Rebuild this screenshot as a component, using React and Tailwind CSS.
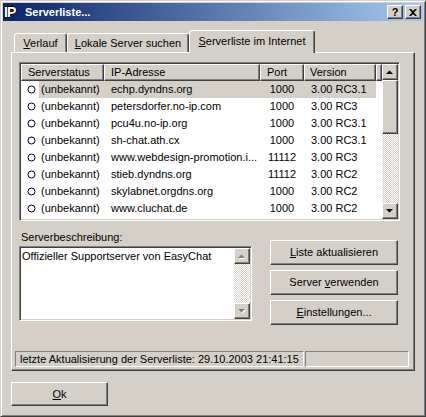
import React from 'react';

const raised =
  'bg-[#d4d0c8] border border-t-white border-l-white border-r-[#404040] border-b-[#404040] shadow-[inset_-1px_-1px_#808080]';
const sunken =
  'border border-t-[#808080] border-l-[#808080] border-r-white border-b-white shadow-[inset_1px_1px_#404040,inset_-1px_-1px_#d4d0c8] p-px';
const thinSunken = 'border border-t-[#808080] border-l-[#808080] border-r-white border-b-white';
const checker =
  'bg-[repeating-conic-gradient(#d4d0c8_0%_25%,#ffffff_0%_50%)] bg-[length:2px_2px]';

const rows = [
  ['echp.dyndns.org', '1000', '3.00 RC3.1'],
  ['petersdorfer.no-ip.com', '1000', '3.00 RC3'],
  ['pcu4u.no-ip.org', '1000', '3.00 RC3.1'],
  ['sh-chat.ath.cx', '1000', '3.00 RC3.1'],
  ['www.webdesign-promotion.i...', '11112', '3.00 RC3'],
  ['stieb.dyndns.org', '11112', '3.00 RC2'],
  ['skylabnet.orgdns.org', '1000', '3.00 RC2'],
  ['www.cluchat.de', '1000', '3.00 RC2'],
];

function Arrow({ up, disabled }) {
  const pts = up ? '0,4 7,4 3.5,0.5' : '0,0 7,0 3.5,3.5';
  return (
    <svg width="8" height="5" viewBox="0 0 8 5" className={up ? '' : 'mt-px'}>
      {disabled && <polygon points={pts} fill="#ffffff" transform="translate(1,1)" />}
      <polygon points={pts} fill={disabled ? '#808080' : '#000000'} />
    </svg>
  );
}

function ScrollBtn({ up, disabled }) {
  return (
    <div className={`${raised} w-[16px] h-[16px] flex items-center justify-center shrink-0`}>
      <Arrow up={up} disabled={disabled} />
    </div>
  );
}

function Tab({ children, width, active }) {
  if (active) {
    return (
      <div
        className={`relative z-10 h-[23px] ${width} bg-[#d4d0c8] border-t border-l border-r border-t-white border-l-white border-r-[#404040] shadow-[inset_-1px_0_#808080] rounded-t-[3px] flex items-center justify-center pb-[2px]`}
      >
        {children}
      </div>
    );
  }
  return (
    <div
      className={`h-[19px] mb-px ${width} bg-[#d4d0c8] border-t border-l border-r border-t-white border-l-white border-r-[#404040] shadow-[inset_-1px_0_#808080] rounded-t-[3px] flex items-center justify-center`}
    >
      {children}
    </div>
  );
}

function Button({ children, className = '' }) {
  return (
    <div className={`${raised} flex items-center justify-center ${className}`}>
      <span>{children}</span>
    </div>
  );
}

export default function App() {
  return (
    <div
      className="w-[426px] h-[417px] bg-[#d4d0c8] text-black text-[11px] leading-[13px] border border-t-[#d4d0c8] border-l-[#d4d0c8] border-r-[#404040] border-b-[#404040] shadow-[inset_1px_1px_#ffffff,inset_-1px_-1px_#808080] p-[2px] select-none overflow-hidden"
      style={{ fontFamily: '"Liberation Sans", Arial, sans-serif' }}
    >
      {/* Titelleiste */}
      <div className="h-[18px] flex items-center bg-[linear-gradient(to_right,#0a246a,#a6caf0)] pl-[1px] pr-[2px]">
        <span className="w-[17px] text-[14px] leading-[16px] font-bold text-white tracking-[-1px] [text-shadow:1px_0_#000,-1px_0_#000,0_1px_#000,0_-1px_#000]">
          IP
        </span>
        <span className="ml-[4px] font-bold text-white">Serverliste...</span>
        <div className="ml-auto flex gap-[2px]">
          <div className={`${raised} w-[16px] h-[14px] flex items-center justify-center font-bold text-[11px] leading-none`}>
            ?
          </div>
          <div className={`${raised} w-[16px] h-[14px] flex items-center justify-center`}>
            <svg width="8" height="7" viewBox="0 0 8 7">
              <path d="M0 0h2l2 2 2-2h2L5 3.5 8 7H6L4 5 2 7H0l3-3.5z" fill="#000" />
            </svg>
          </div>
        </div>
      </div>

      <div className="px-[8px]">
        {/* Reiter */}
        <div className="relative z-10 mt-[9px] h-[23px] flex items-end">
          <Tab width="w-[53px] ml-[3px]">
            <span><u>V</u>erlauf</span>
          </Tab>
          <Tab width="w-[122px]">
            <span><u>L</u>okale Server suchen</span>
          </Tab>
          <Tab width="w-[126px]" active>
            <span><u>S</u>erverliste im Internet</span>
          </Tab>
        </div>

        {/* Reiterseite */}
        <div className="-mt-px h-[319px] flex flex-col border border-t-white border-l-white border-r-[#404040] border-b-[#404040] shadow-[inset_-1px_-1px_#808080] pt-[9px] pl-[7px]">
          {/* Serverliste */}
          <div className={`${sunken} w-[381px] h-[159px] bg-white flex`}>
            <div className="w-[361px] flex flex-col">
              <div className="flex h-[17px] shrink-0">
                <div className={`${raised} w-[83px] pl-[6px] flex items-center`}>Serverstatus</div>
                <div className={`${raised} w-[156px] pl-[6px] flex items-center`}>IP-Adresse</div>
                <div className={`${raised} w-[44px] pl-[6px] flex items-center`}>Port</div>
                <div className={`${raised} w-[72px] pl-[5px] flex items-center`}>Version</div>
                <div className={`${raised} w-[6px]`} />
              </div>
              {rows.map(([host, port, version], i) => (
                <div key={host} className="flex h-[17px] items-center">
                  <div className="w-[18px] h-full flex items-center pl-[6px]">
                    <svg width="9" height="9" viewBox="0 0 9 9">
                      <circle cx="4.5" cy="4.5" r="3.5" fill="#fff" stroke="#000" strokeWidth="1" />
                    </svg>
                  </div>
                  <div className={`flex h-full items-center ${i === 0 ? 'bg-[#d4d0c8]' : ''}`}>
                    <div className="w-[65px] pl-[2px]">(unbekannt)</div>
                    <div className="w-[156px] pl-[7px] whitespace-nowrap overflow-hidden">{host}</div>
                    <div className="w-[44px] text-center">{port}</div>
                    <div className="w-[72px] pl-[7px] whitespace-nowrap">{version}</div>
                  </div>
                </div>
              ))}
            </div>
            <div className="w-[16px] flex flex-col">
              <ScrollBtn up />
              <div className={`${raised} h-[54px] shrink-0`} />
              <div className={`${checker} flex-1`} />
              <ScrollBtn />
            </div>
          </div>

          {/* Beschreibung und Knöpfe */}
          <div className="flex mt-[10px]">
            <div className="w-[233px] flex flex-col">
              <div className="h-[15px] pl-[2px]">Serverbeschreibung:</div>
              <div className={`${sunken} h-[75px] bg-white flex`}>
                <div className="flex-1 pt-[2px] pl-[1px] whitespace-nowrap">
                  Offizieller Supportserver von EasyChat
                </div>
                <div className="w-[16px] flex flex-col">
                  <ScrollBtn up disabled />
                  <div className={`${checker} flex-1`} />
                  <ScrollBtn disabled />
                </div>
              </div>
            </div>
            <div className="ml-[18px] pt-[9px] flex flex-col gap-[5px]">
              <Button className="w-[128px] h-[25px]">
                <u>L</u>iste aktualisieren
              </Button>
              <Button className="w-[128px] h-[25px]">
                Server <u>v</u>erwenden
              </Button>
              <Button className="w-[128px] h-[25px]">
                <u>E</u>instellungen...
              </Button>
            </div>
          </div>

          {/* Statusleiste */}
          <div className="mt-auto mb-[3px] -ml-[4px] flex gap-[1px]">
            <div className={`${thinSunken} w-[289px] h-[16px] pl-[4px] flex items-center whitespace-nowrap`}>
              letzte Aktualisierung der Serverliste: 29.10.2003 21:41:15
            </div>
            <div className={`${thinSunken} w-[104px] h-[16px]`} />
          </div>
        </div>

        <Button className="mt-[11px] w-[97px] h-[24px]">
          <u>O</u>k
        </Button>
      </div>
    </div>
  );
}
